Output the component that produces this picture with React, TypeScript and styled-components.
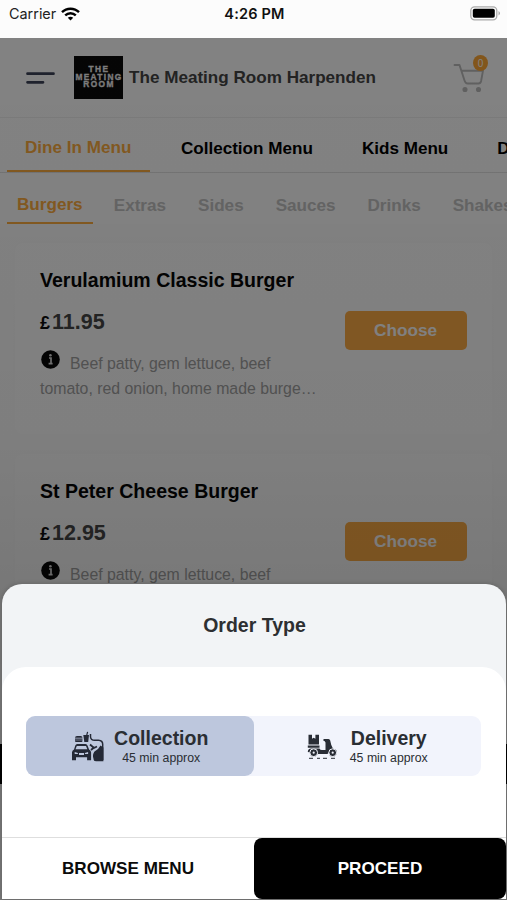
import React from "react";
import styled, { createGlobalStyle, css } from "styled-components";

const Global = createGlobalStyle`
  * { box-sizing: border-box; }
  body { margin: 0; background: #fff; }
  button { font: inherit; border: 0; padding: 0; background: none; }
`;

const Screen = styled.div`
  position: relative;
  width: 507px;
  height: 900px;
  overflow: hidden;
  display: flex;
  flex-direction: column;
  background: #fff;
  font-family: "Liberation Sans", Arial, sans-serif;
  white-space: nowrap;
`;

const StatusBar = styled.div`
  flex: none;
  height: 38px;
  padding: 0 7px 11px 9px;
  display: grid;
  grid-template-columns: 1fr auto 1fr;
  align-items: center;
  background: #fcfcfc;
  color: #222;
  font: 400 14.4px/17px Inter, sans-serif;
`;

const Carrier = styled.div`
  display: flex;
  align-items: center;
  gap: 5px;
`;

const Clock = styled.div`
  font-weight: 600;
  font-size: 14.5px;
  letter-spacing: 0.2px;
  color: #111;
`;

const BatteryIcon = styled.svg`
  justify-self: end;
`;

const StorePage = styled.main`
  position: relative;
  flex: 1;
  min-height: 0;
  overflow: hidden;
  background: #fff;
`;

const Header = styled.header`
  height: 80px;
  padding: 0 17px 0 26px;
  display: flex;
  align-items: center;
  border-bottom: 1px solid #f0f0f0;
`;

const Logo = styled.div`
  width: 49px;
  height: 43px;
  margin-left: 19px;
  display: flex;
  flex-direction: column;
  align-items: center;
  justify-content: center;
  background: #0a0a0a;
  color: #f4f4f4;
  font-weight: 700;
  font-size: 8.3px;
  line-height: 7.4px;
`;

const LogoLine = styled.span<{ $tight?: boolean }>`
  margin-right: -1px;
  letter-spacing: ${(p) => (p.$tight ? "1.35px" : "1.4px")};
  -webkit-text-stroke: 0.3px #f4f4f4;
`;

const Title = styled.h1`
  flex: 1;
  margin: 0 0 0 6px;
  padding-top: 1px;
  font-size: 17.1px;
  line-height: 20px;
  color: #444;
`;

const Cart = styled.div`
  position: relative;
  width: 38px;
  height: 44px;
`;

const CartBadge = styled.span`
  position: absolute;
  top: -1px;
  right: 2px;
  width: 15px;
  height: 16px;
  border-radius: 50%;
  background: #ffa836;
  color: #fff;
  font-size: 10px;
  line-height: 17px;
  text-align: center;
`;

const MenuTabs = styled.nav`
  height: 55px;
  padding-left: 7px;
  display: flex;
  gap: 12px;
  border-bottom: 1px solid #e2e2e2;
`;

const tabBase = css<{ $active?: boolean }>`
  flex: none;
  font-weight: 700;
  font-size: 17.1px;
  border-bottom: 2px solid ${(p) => (p.$active ? "#ffae40" : "transparent")};
  color: ${(p) => (p.$active ? "#ffae40" : "#000")};
`;

const MenuTab = styled.button<{ $active?: boolean }>`
  ${tabBase}
  padding: ${(p) => (p.$active ? "7px 19px 0 18px" : "9px 18.5px 0 18.5px")};
`;

const CategoryTab = styled.button<{ $active?: boolean }>`
  ${tabBase}
  padding: ${(p) => (p.$active ? "15px 10px 0 10px" : "17px 10px 0 10px")};
  margin-right: ${(p) => (p.$active ? "-0.8px" : "0")};
  color: ${(p) => (p.$active ? "#ffae40" : "#c4c4c4")};
`;

const CategoryTabs = styled.nav`
  height: 51px;
  padding-left: 7px;
  display: flex;
  gap: 12px;
`;

const List = styled.section`
  padding: 19px 15px;
  display: flex;
  flex-direction: column;
  gap: 20px;
  background: #fdfdfd;
`;

const Card = styled.article`
  height: 191px;
  padding: 26px 25.500px 0 25px;
  display: flex;
  justify-content: space-between;
  border-radius: 8px;
  background: #fff;
  box-shadow: 0 0 4px rgba(0, 0, 0, 0.015);
`;

const Dish = styled.div`
  width: 285px;
`;

const DishName = styled.h2`
  margin: 0;
  font-size: 19.55px;
  line-height: 22px;
  color: #050505;
`;

const Price = styled.div`
  margin-top: 18px;
  font-weight: 700;
  font-size: 21.5px;
  line-height: 26px;
  color: #464646;
`;

const Currency = styled.span`
  margin-right: 2px;
  font-size: 18px;
  color: #0c0c0c;
`;

const Description = styled.p`
  margin: 14px 0 0;
  font-size: 15.85px;
  line-height: 24.5px;
  color: #a2a2a2;
`;

const InfoIcon = styled.svg`
  margin-right: 10px;
  vertical-align: -1px;
`;

const ChooseButton = styled.button`
  width: 122px;
  height: 39px;
  margin-top: 42px;
  border-radius: 5px;
  background: #ffad45;
  color: #fff;
  font-weight: 700;
  font-size: 17.2px;
`;

const BasketBar = styled.div`
  position: absolute;
  top: 706px;
  left: 0;
  right: 0;
  height: 40px;
  background: #000;
`;

const Scrim = styled.div`
  position: absolute;
  inset: 0;
  background: linear-gradient(rgba(0, 0, 0, 0.49) 0, rgba(0, 0, 0, 0.5) 400px, rgba(0, 0, 0, 0.53) 560px);
`;

const Sheet = styled.section`
  position: absolute;
  top: 584px;
  left: 2px;
  right: 1px;
  bottom: 1px;
  display: flex;
  flex-direction: column;
  border-radius: 20px 20px 0 0;
  background: #f2f4f6;
  box-shadow: 0 0 5px rgba(0, 0, 0, 0.2);
  overflow: hidden;
`;

const SheetTitle = styled.h2`
  height: 83px;
  margin: 0;
  padding: 0 0 1px 1px;
  display: flex;
  align-items: center;
  justify-content: center;
  font-size: 19.5px;
  color: #2d2f31;
`;

const SheetBody = styled.div`
  flex: 1;
  padding: 49px 24px 0;
  border-radius: 24px 24px 0 0;
  background: #fff;
`;

const Segments = styled.div`
  width: 455px;
  height: 60px;
  display: flex;
  border-radius: 9px;
  background: #f2f4fc;
`;

const Segment = styled.button<{ $selected?: boolean }>`
  flex: 1;
  padding-top: 2px;
  display: flex;
  align-items: center;
  justify-content: center;
  gap: ${(p) => (p.$selected ? "10px" : "12px")};
  border-radius: 9px;
  background: ${(p) => (p.$selected ? "#bdc7dd" : "transparent")};
  color: #2a2e33;
`;

const SegmentText = styled.span`
  display: flex;
  flex-direction: column;
  align-items: center;
`;

const SegmentName = styled.span`
  font-weight: 700;
  font-size: 19.5px;
  line-height: 22px;
`;

const SegmentNote = styled.span`
  font-size: 12.3px;
  line-height: 19px;
`;

const Footer = styled.div`
  height: 62px;
  display: flex;
  background: #fff;
  border-top: 1px solid #dedede;
`;

const FooterButton = styled.button<{ $primary?: boolean }>`
  flex: 1;
  padding-top: 1px;
  border-radius: 8px;
  background: ${(p) => (p.$primary ? "#000" : "#fff")};
  color: ${(p) => (p.$primary ? "#fff" : "#0b0b0b")};
  font-weight: 700;
  font-size: 17.1px;
`;

const WifiIcon = () => (
  <svg width="19" height="14" viewBox="0 0 19 14" fill="none" stroke="#000" strokeWidth="2.4">
    <path d="M1 5.2C5.7.5 13.3.5 18 5.2" />
    <path d="M4.2 8.4C7.2 5.5 11.8 5.5 14.8 8.4" />
    <path d="M9.5 13.6 6.8 10.8c1.5-1.5 3.9-1.5 5.4 0Z" fill="#000" stroke="none" />
  </svg>
);

const MenuIcon = () => (
  <svg width="29" height="14" viewBox="0 0 29 14" stroke="#3c4358" strokeWidth="2.7" strokeLinecap="round">
    <path d="M1.5 2.7h26M1.5 11.300h15.500" />
  </svg>
);

const CartIcon = () => (
  <svg width="38" height="44" viewBox="0 0 38 44" fill="none" stroke="#bcbcbc" strokeWidth="1.9" strokeLinecap="round" strokeLinejoin="round">
    <path d="M2.500 9h5l5 15.500q1 3 3 3h11q2 0 2.600-2.500L31 14.700H9.400" />
    <circle cx="13" cy="33.500" r="1.600" fill="#bcbcbc" />
    <circle cx="26.500" cy="33.500" r="1.600" fill="#bcbcbc" />
  </svg>
);

const Info = () => (
  <InfoIcon width="20" height="20" viewBox="0 0 20 20">
    <circle cx="10.5" cy="9.500" r="9.300" fill="#080808" />
    <path d="M9 8h2v5.800M8.600 13.700h4" fill="none" stroke="#ddd" strokeWidth="1.700" />
    <circle cx="10.400" cy="5.200" r="1.300" fill="#ddd" />
  </InfoIcon>
);

const CollectionIcon = () => (
  <svg width="33" height="32" viewBox="0 0 33 32" fill="#242936">
    <path d="M4 6.800Q4 5 6 5h3.600q1.900 0 1.900 1.800ZM4 7.400h7.500v1.300H4ZM4 9.300h7.500v.8q0 1-1 1H5q-1 0-1-1Z" />
    <path d="M12.300 4h2.900l.8-3.200 1.200.3-.8 2.900h1.600l-.8 7h-3.900Z" />
    <path d="M4.300 14.500q.4-1.500 2-1.500h8.200q1.500 0 2 1.500l1.600 4q2 1 2 3v7.800h-4v-3H5v3H1v-7.800q0-2 2-3Zm1.500.4-1.300 3.300h11.800L15 14.900ZM3.700 21v2h3.200v-1Zm13.400 0-3.200 1v1h3.200ZM8 22v2h5v-2Z" fillRule="evenodd" />
    <path d="M19.500 3v3q.5 3.300 4 3.300h4q4.200.2 4.200 4V29" fill="none" stroke="#242936" strokeWidth="1.500" />
    <path d="M19 13.500 23 17l3-1.500M20 19l3.500-3" fill="none" stroke="#242936" strokeWidth="1.800" />
    <path d="M23.500 20.500 27 18l2.500-3.500 2.900 2V30.300H25q-2.500 0-2.500-2.500-1.500-4 1-7.300Z" />
  </svg>
);

const DeliveryIcon = () => (
  <svg width="31" height="26" viewBox="0 0 31 26" fill="#292d35">
    <path d="M1.500.800H5v4l1.700-1 1.700 1v-4H12v9.700H1.500ZM.8 11.500h11.700v2.300H.8Z" />
    <path d="M16.500 5h5q1.400 0 1.700 1.500l1 4.200 1.800 4q3.800.5 4 3.300H22L20.500 20H10Q7 15.500 3.500 18.500L.8 18q0-3.300 3.200-3.500h8.500q.5 1.500 2.500 1.500h3.500V8.500L17.500 7h-1Z" />
    <circle cx="6.700" cy="18.700" r="3.900" stroke="#f2f4fc" strokeWidth="1" />
    <circle cx="6.700" cy="18.700" r="1.100" fill="#f2f4fc" />
    <circle cx="25.700" cy="18.700" r="3.900" stroke="#f2f4fc" strokeWidth="1" />
    <circle cx="25.700" cy="18.700" r="1.100" fill="#f2f4fc" />
    <path d="M2 24.300h4M10 24.300h3M16 24.300h4M24 24.300h4" stroke="#292d35" strokeWidth="1" />
  </svg>
);

const menus = ["Dine In Menu", "Collection Menu", "Kids Menu", "Drinks Menu"];
const categories = ["Burgers", "Extras", "Sides", "Sauces", "Drinks", "Shakes"];
const dishes = [
  { name: "Verulamium Classic Burger", price: "11.95" },
  { name: "St Peter Cheese Burger", price: "12.95" },
];

export default function App() {
  return (
    <Screen>
      <Global />
      <StatusBar>
        <Carrier>
          Carrier
          <WifiIcon />
        </Carrier>
        <Clock>4:26 PM</Clock>
        <BatteryIcon width="30" height="15" viewBox="0 0 30 15">
          <rect x="0.800" y="0.800" width="26" height="13" rx="3.800" fill="#fcfcfc" stroke="#aaa" strokeWidth="1.300" />
          <rect x="2.800" y="2.800" width="22" height="9" rx="1.800" fill="#000" />
          <path d="M28.500 5v4.500q1.500-.6 1.500-2.200T28.500 5Z" fill="#aaa" />
        </BatteryIcon>
      </StatusBar>

      <StorePage>
        <Header>
          <MenuIcon />
          <Logo>
            <LogoLine>THE</LogoLine>
            <LogoLine $tight>MEATING</LogoLine>
            <LogoLine>ROOM</LogoLine>
          </Logo>
          <Title>The Meating Room Harpenden</Title>
          <Cart>
            <CartIcon />
            <CartBadge>0</CartBadge>
          </Cart>
        </Header>
        <MenuTabs>
          {menus.map((m, i) => (
            <MenuTab key={m} $active={i === 0}>{m}</MenuTab>
          ))}
        </MenuTabs>
        <CategoryTabs>
          {categories.map((c, i) => (
            <CategoryTab key={c} $active={i === 0}>{c}</CategoryTab>
          ))}
        </CategoryTabs>
        <List>
          {dishes.map((d) => (
            <Card key={d.name}>
              <Dish>
                <DishName>{d.name}</DishName>
                <Price><Currency>£</Currency>{d.price}</Price>
                <Description>
                  <Info />Beef patty, gem lettuce, beef<br />
                  tomato, red onion, home made burge…
                </Description>
              </Dish>
              <ChooseButton>Choose</ChooseButton>
            </Card>
          ))}
        </List>
        <BasketBar />
        <Scrim />
      </StorePage>

      <Sheet>
        <SheetTitle>Order Type</SheetTitle>
        <SheetBody>
          <Segments>
            <Segment $selected>
              <CollectionIcon />
              <SegmentText>
                <SegmentName>Collection</SegmentName>
                <SegmentNote>45 min approx</SegmentNote>
              </SegmentText>
            </Segment>
            <Segment>
              <DeliveryIcon />
              <SegmentText>
                <SegmentName>Delivery</SegmentName>
                <SegmentNote>45 min approx</SegmentNote>
              </SegmentText>
            </Segment>
          </Segments>
        </SheetBody>
        <Footer>
          <FooterButton>BROWSE MENU</FooterButton>
          <FooterButton $primary>PROCEED</FooterButton>
        </Footer>
      </Sheet>
    </Screen>
  );
}
